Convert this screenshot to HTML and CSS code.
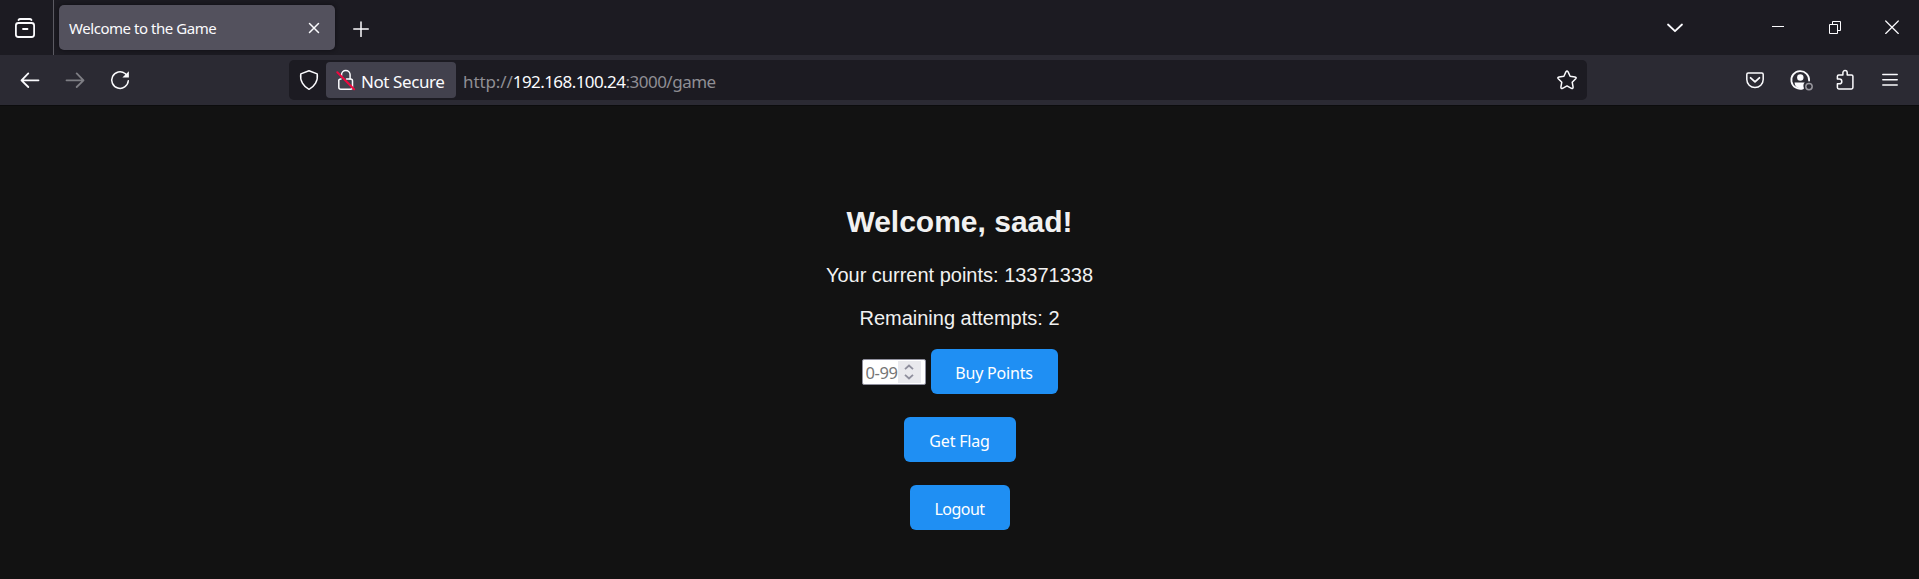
FILE: index.html
```html
<!DOCTYPE html>
<html lang="en">
<head>
<meta charset="utf-8">
<title>Welcome to the Game</title>
<link rel="stylesheet" href="styles.css">
</head>
<body>
<header class="tabstrip">
  <div class="library">
    <svg class="icon" width="24" height="24" viewBox="0 0 24 24"><path class="bold" d="M5.500 4q.6-1 2-1h9q1.400 0 2 1"/><rect class="bold" x="2.900" y="7" width="18.200" height="14" rx="2.500"/><path class="bold" d="M10 13h4.500"/></svg>
  </div>
  <div class="tab">
    <span class="tab-title">Welcome to the Game</span>
    <svg class="icon" width="12" height="12" viewBox="0 0 12 12"><path d="M1.500 1.500l9 9M10.500 1.500l-9 9"/></svg>
  </div>
  <div class="newtab"><svg class="icon" width="16" height="16" viewBox="0 0 16 16"><path d="M8 1v14.500M.8 8h14.500"/></svg></div>
  <div class="tablist"><svg class="icon" width="18" height="12" viewBox="0 0 18 12"><path class="bold" d="M2 3.500l7 6.700 7-6.700"/></svg></div>
  <div class="window-buttons">
    <div class="window-button"><svg class="icon sharp" width="12" height="14" viewBox="0 0 12 14"><path d="M0 6.500h12"/></svg></div>
    <div class="window-button"><svg class="icon sharp" width="12" height="14" viewBox="0 0 12 14"><path d="M.5 4.500h8v9h-8zM3.500 4.500v-3h8v9h-3"/></svg></div>
    <div class="window-button"><svg class="icon thin" width="14" height="14" viewBox="0 0 14 14"><path d="M.7 1l12.600 12.500M13.300 1L.7 13.500"/></svg></div>
  </div>
</header>
<nav class="toolbar">
  <div class="tool"><svg class="icon" width="24" height="24" viewBox="0 0 24 24"><path class="bold" d="M20.500 12.300H3.700M10.300 5.400l-6.800 6.900 6.800 6.700"/></svg></div>
  <div class="tool dim"><svg class="icon" width="24" height="24" viewBox="0 0 24 24"><path class="bold" d="M3.500 12.300h16.800M13.700 5.400l6.800 6.900-6.800 6.700"/></svg></div>
  <div class="tool"><svg class="icon" width="24" height="24" viewBox="0 0 24 24"><path d="M20.300 12.800a8.300 8.300 0 1 1-3.200-7.300l1.200 1.300"/><path class="solid" d="M20.900 3.200v6.300h-6.500z"/></svg></div>
  <div class="urlbar">
    <div class="shield"><svg class="icon" width="22" height="24" viewBox="0 0 22 24"><path d="M11 2.700L19.200 5.900C20.300 12.800 16.500 18.500 11 21.300 5.500 18.500 1.700 12.800 2.800 5.900z"/></svg></div>
    <div class="identity">
      <svg class="icon" width="20" height="24" viewBox="0 0 20 24"><path d="M5.500 8V6.700a4.300 4.300 0 0 1 8.600 0V11"/><path d="M2.800 12v7.200q0 2 2 2h9.700q2 0 2-2V13q0-2-2-2h-4M5 11q-2.200 0-2.200 2"/><path class="slash" d="M1.300 4.300l16.800 17"/></svg>
      <span class="identity-text">Not Secure</span>
    </div>
    <div class="address"><span class="scheme">http://</span><span class="host">192.168.100.24</span><span class="path">:3000/game</span></div>
    <div class="star"><svg class="icon" width="24" height="24" viewBox="0 0 24 24"><path d="M10.900 3.900q1.100-1.600 2.200 0l2 4.300 4.900.7q1.900.5.700 1.900l-3.500 3.400.9 5q0 1.700-1.700 1.100L12 17.900l-4.400 2.400q-1.700.6-1.700-1.100l.9-5-3.500-3.400q-1.200-1.400.7-1.900l4.900-.7z"/></svg></div>
  </div>
  <div class="tools-right">
    <div class="tool"><svg class="icon" width="24" height="24" viewBox="0 0 24 24"><path d="M5.200 5h13.600q1.400 0 1.400 1.400v5.200a8.200 8 0 0 1-16.400 0V6.400Q3.800 5 5.200 5z"/><path class="bold" d="M7.600 9.800l4.400 4.100 4.400-4.100"/></svg></div>
    <div class="tool"><svg class="icon" width="26" height="24" viewBox="0 0 26 24"><path class="bold" d="M16 20.400a8.900 8.900 0 1 1 6.100-7.700"/><circle class="solid" cx="13.300" cy="9.500" r="3.200"/><path class="solid" d="M7.500 14.500h10.200q-2 2-.9 5.300-4 1.500-7.300-.8-2-2-2-4.500z"/><circle class="badge" cx="22" cy="18.600" r="3.200"/></svg></div>
    <div class="tool"><svg class="icon" width="24" height="24" viewBox="0 0 24 24"><path d="M9.900 6.900V4.700a2.150 2.150 0 0 1 4.300 0v2.200h4.300q1.400 0 1.400 1.400v11.300q0 1.400-1.400 1.400H5.800q-1.400 0-1.400-1.400v-3.800h2a2.400 2.400 0 0 0 0-4.800h-2V8.300q0-1.400 1.400-1.400z"/></svg></div>
    <div class="tool"><svg class="icon" width="16" height="16" viewBox="0 0 16 16"><path d="M.8 2.600h14.400M.8 7.800h14.400M.8 13h14.400"/></svg></div>
  </div>
</nav>
<main class="page">
  <h2 class="heading">Welcome, saad!</h2>
  <p class="line">Your current points: 13371338</p>
  <p class="line">Remaining attempts: 2</p>
  <div class="buy">
    <div class="number"><span class="placeholder">0-99</span><span class="spinner"><svg class="chevrons" width="12" height="16" viewBox="0 0 12 16"><path d="M2 5.200l4-3.700 4 3.700M2 10.800l4 3.700 4-3.700"/></svg></span></div>
    <button class="button buy-button">Buy Points</button>
  </div>
  <button class="button flag-button">Get Flag</button>
  <button class="button logout-button">Logout</button>
</main>
</body>
</html>
```
FILE: styles.css
```css
* { box-sizing: border-box; }
body {
  margin: 0;
  height: 579px;
  overflow: hidden;
  background: #121212;
  color: #fbfbfe;
  font-family: "Noto Sans", "Open Sans", sans-serif;
}
.icon { display: block; flex: none; fill: none; stroke: #fbfbfe; stroke-width: 1.5; stroke-linecap: round; stroke-linejoin: round; }
.sharp { stroke-width: 1; stroke-linecap: butt; stroke-linejoin: miter; }
.thin { stroke-width: 1.2; }
.bold { stroke-width: 1.8; }
.solid { fill: #fbfbfe; stroke: none; }
.slash { stroke: #f0083f; stroke-width: 2; }
.badge { stroke: #97969d; }

.tabstrip { display: flex; height: 55px; background: #1c1b22; }
.library { display: flex; width: 54px; padding: 16px 0 0 13px; border-right: 1px solid #5b5a62; }
.tab {
  display: flex; align-items: center; justify-content: space-between;
  width: 276px; height: 45px; margin: 5px 0 0 5px; padding: 0 15px 0 10px;
  border-radius: 5px; background: #53515d; box-shadow: 0 0 4px #0e0d12;
}
.tab-title { font-size: 15px; line-height: 20px; letter-spacing: -.45px; white-space: nowrap; }
.newtab { padding: 21px 0 0 18px; }
.tablist { margin-left: auto; padding: 21px 65px 0 0; }
.window-buttons { display: flex; padding-top: 20px; margin-right: -1px; }
.window-button { display: flex; justify-content: center; width: 57px; }

.toolbar { display: flex; height: 51px; padding-left: 7px; background: #2b2a33; border-bottom: 1px solid #0c0c0d; }
.tool { display: flex; align-items: center; justify-content: center; width: 45px; height: 50px; }
.dim { opacity: .4; }
.urlbar { display: flex; width: 1298px; height: 40px; margin: 5px 0 0 147px; border-radius: 5px; background: #1c1b22; }
.shield { display: flex; align-items: center; width: 37px; padding-left: 9px; }
.identity { display: flex; align-items: center; gap: 5px; width: 130px; height: 36px; margin-top: 2px; padding-left: 10px; border-radius: 4px; background: #42414d; }
.identity-text, .address { font-size: 17px; line-height: 24px; padding-top: 3px; white-space: nowrap; }
.identity-text { letter-spacing: -.42px; }
.address { display: flex; align-items: center; margin-left: 7px; color: #8f8e94; }
.scheme { letter-spacing: -.1px; }
.host { color: #fbfbfe; letter-spacing: -.57px; }
.path { letter-spacing: -.5px; }
.star { display: flex; align-items: center; margin-left: auto; padding-right: 8px; }
.tools-right { display: flex; margin-left: auto; padding-right: 7px; }

.page { display: flex; flex-direction: column; align-items: center; padding-top: 98px; color: #f1f1f1; font-family: "Liberation Sans", Arial, sans-serif; }
.heading { margin: 0 0 25px; font-size: 30px; line-height: 35px; }
.line { margin: 0 0 20px; font-size: 20px; line-height: 23px; }
.buy { display: flex; align-items: center; gap: 5px; margin: -1px 0 23px; }
.number { display: flex; align-items: center; width: 64px; height: 26px; padding: 1px 4px 1px 3px; border: 1px solid #8f8f9d; border-radius: 2px; background: #fff; }
.placeholder { flex: none; width: 32px; height: 24px; overflow: hidden; white-space: nowrap; font: 16.500px/26px "Noto Sans", "Open Sans", sans-serif; letter-spacing: -.4px; color: #757575; }
.spinner { display: flex; align-items: center; justify-content: center; width: 23px; height: 22px; background: #e9e9ed; }
.chevrons { fill: none; stroke: #8f8f9d; stroke-width: 1.8; }
.button {
  height: 45px; padding: 2px 0 0; border: 0; border-radius: 6px; letter-spacing: -.2px;
  background: #1f8ff3; color: #fff; font: 16px "Noto Sans", "Open Sans", sans-serif;
}
.buy-button { width: 127px; }
.flag-button { width: 112px; margin-bottom: 23px; }
.logout-button { width: 100px; letter-spacing: -.5px; }
```
